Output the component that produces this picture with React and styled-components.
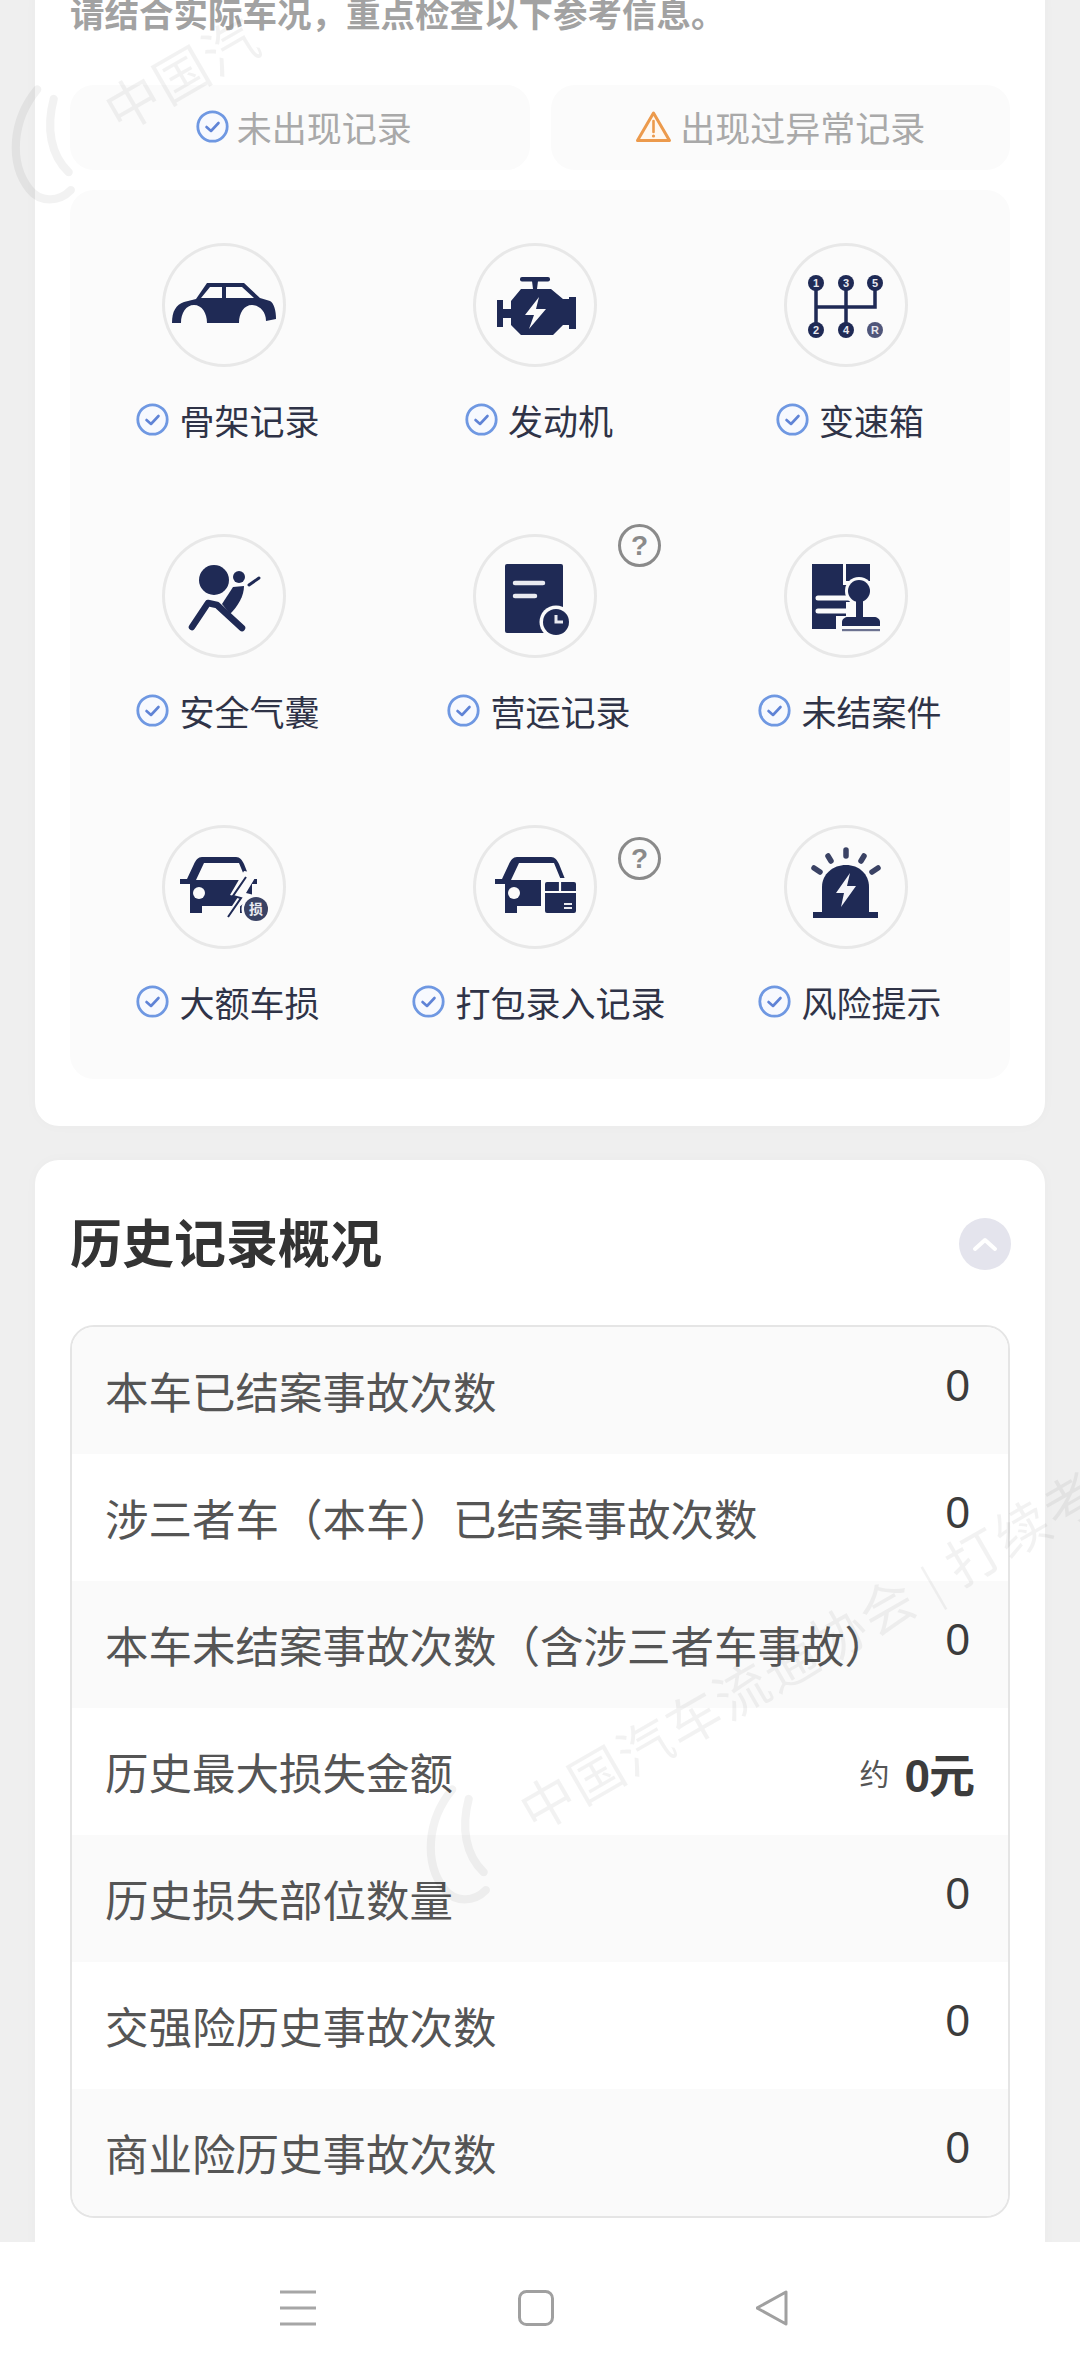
import React from 'react'
import styled, { createGlobalStyle } from 'styled-components'

const NAVY = '#1f2a55'
const BG = '#fbfbfb'

const GlobalStyle = createGlobalStyle`
  html, body {
    margin: 0;
    padding: 0;
    background: #efefef;
  }
  * {
    box-sizing: border-box;
  }
`

const Shell = styled.div`
  position: relative;
  display: flex;
  flex-direction: column;
  width: 1080px;
  height: 2374px;
  overflow: hidden;
  background: #efefef;
  font-family: 'Liberation Sans', 'Noto Sans CJK SC', sans-serif;
`

const Content = styled.main`
  position: relative;
  flex: 1;
  min-height: 0;
  overflow: hidden;
  padding: 0 35px;
`

const Card = styled.section`
  background: #fff;
  border-radius: 24px;
  padding: 0 35px;
  box-shadow: 0 0 14px rgba(0, 0, 0, 0.025);
`

const CheckCard = styled(Card)`
  margin-top: -24px;
  margin-bottom: 34px;
  padding-top: 19px;
  padding-bottom: 47px;
`

const HistoryCard = styled(Card)`
  padding-top: 56px;
  padding-bottom: 100px;
`

const Hint = styled.p`
  margin: 0;
  font-size: 34.5px;
  line-height: 40px;
  font-weight: 700;
  color: #a2a2a2;
`

const Tabs = styled.div`
  display: grid;
  grid-template-columns: 1fr 1fr;
  gap: 21px;
  margin-top: 50px;
`

const Tab = styled.div`
  display: flex;
  align-items: center;
  justify-content: center;
  gap: 8px;
  height: 85px;
  padding-bottom: 2px;
  padding-left: ${p => p.$inset || 0}px;
  border-radius: 24px;
  background: ${BG};
  font-size: 35px;
  color: #a9a9a9;
`

const Panel = styled.div`
  display: grid;
  grid-template-columns: repeat(3, 311px);
  row-gap: 90px;
  margin-top: 20px;
  padding: 53px 0;
  border-radius: 24px;
  background: ${BG};
`

const Item = styled.div`
  position: relative;
  display: flex;
  flex-direction: column;
  align-items: center;
  gap: 27px;
  margin-left: -3px;
`

const Disc = styled.div`
  width: 124px;
  height: 124px;
  border-radius: 50%;
  box-shadow: inset 0 0 0 3px #e8e8e8;

  svg {
    display: block;
  }
`

const ItemLabel = styled.div`
  display: flex;
  align-items: center;
  gap: 10px;
  height: 50px;
  padding-left: 8px;
  font-size: 35px;
  color: #2f3347;
  white-space: nowrap;
`

const Help = styled.span`
  position: absolute;
  left: 50%;
  top: ${p => p.$top}px;
  margin-left: 83px;
  display: flex;
  align-items: center;
  justify-content: center;
  width: 43px;
  height: 43px;
  border: 3px solid #8a8a8a;
  border-radius: 50%;
  font-size: 28px;
  font-weight: 700;
  color: #8a8a8a;
`

const Header = styled.header`
  display: flex;
  align-items: center;
  justify-content: space-between;
  height: 52px;
`

const Title = styled.h2`
  margin: 0;
  padding-bottom: 4px;
  font-size: 52px;
  font-weight: 700;
  color: #333;
`

const Toggle = styled.span`
  display: flex;
  align-items: center;
  justify-content: center;
  width: 52px;
  height: 52px;
  margin: 3px -1px 0 0;
  border-radius: 50%;
  background: #e4e4ed;
`

const Table = styled.div`
  margin-top: 57px;
  border: 2px solid #e5e5e5;
  border-radius: 24px;
  overflow: hidden;
`

const Row = styled.div`
  display: flex;
  align-items: center;
  justify-content: space-between;
  height: 127px;
  padding: 0 38px 0 33px;
  background: ${p => (p.$striped ? '#fafafa' : '#fff')};
  font-size: 43.5px;
  color: #555;
  white-space: nowrap;
`

const Count = styled.span`
  padding-bottom: 9px;
  font-size: 44px;
  color: #3c3c3c;
`

const Amount = styled.span`
  display: flex;
  align-items: center;
  gap: 15px;
  margin-right: -4px;
  font-size: 30px;
  color: #555;

  b {
    font-size: 46px;
    letter-spacing: -1px;
    color: #3c3c3c;
  }
`

const Watermark = styled.div`
  position: absolute;
  left: ${p => p.$left}px;
  top: ${p => p.$top}px;
  display: flex;
  align-items: center;
  gap: 14px;
  transform: rotate(-30deg);
  transform-origin: left center;
  font-family: 'Liberation Serif', 'Noto Sans CJK SC', serif;
  font-size: 54px;
  letter-spacing: 2px;
  color: rgba(0, 0, 0, 0.05);
  white-space: nowrap;
  pointer-events: none;
`

const NavBar = styled.nav`
  position: relative;
  flex: none;
  display: flex;
  align-items: center;
  justify-content: center;
  gap: 202px;
  height: 132px;
  padding-right: 8px;
  background: #fff;
`

const CheckMark = ({ size = 33 }) => (
  <svg width={size} height={size} viewBox="0 0 33 33">
    <circle cx="16.5" cy="16.5" r="14.7" fill="#f7f9fe" stroke="#6f98e2" strokeWidth="2.8" />
    <path d="M10.5 17 L15 21 L22.5 13" fill="none" stroke="#5f83d6" strokeWidth="2.6" strokeLinecap="round" strokeLinejoin="round" />
  </svg>
)

const WarnMark = () => (
  <svg width="37" height="34" viewBox="0 0 37 34">
    <path d="M18.5 3 L34.5 30.5 H2.5 Z" fill="#fff8f0" stroke="#ec9a4c" strokeWidth="3" strokeLinejoin="round" />
    <path d="M18.5 11 V22" stroke="#ec9a4c" strokeWidth="2.6" strokeLinecap="round" />
    <circle cx="18.5" cy="26" r="1.6" fill="#ec9a4c" />
  </svg>
)

const Swirl = () => (
  <svg width="110" height="130" viewBox="0 0 90 110" fill="none" stroke="rgba(0,0,0,0.05)" strokeWidth="7" strokeLinecap="round">
    <path d="M62 8 C30 20 10 50 14 78 C16 92 30 100 44 96" />
    <path d="M70 22 C52 40 44 62 50 82" />
  </svg>
)

const Glyph = ({ children }) => (
  <svg width="124" height="124" viewBox="0 0 124 124">
    {children}
  </svg>
)

const FrameIcon = () => (
  <Glyph>
    <path
      fill={NAVY}
      fillRule="evenodd"
      d="M10 80 C10 68 14 62 22 59 L34 56 L45 40 H82 L98 55 L108 58 C112 60 114 68 114 76 L104 78 C104 68 97 62 90 62 C82 62 77 70 77 80 H45 C45 70 40 62 32 62 C24 62 19 70 19 80 Z M48 44 L39 55 H60 V44 Z M64 44 V55 H92 L80 44 Z"
    />
  </Glyph>
)

const EngineIcon = () => (
  <Glyph>
    <g fill={NAVY}>
      <rect x="47" y="34" width="30" height="4.5" rx="2" />
      <path d="M59 38 H65 L64 46 H60 Z" />
      <rect x="24" y="57" width="6" height="27" />
      <rect x="30" y="66" width="9" height="9" />
      <path d="M48 46 H78 L90 56 H96 V54 H103 V86 H96 V82 H90 L80 92 H48 L38 82 V58 Z" />
    </g>
    <path d="M66 54 L52 72 H61 L56 86 L73 66 H63 Z" fill={BG} />
  </Glyph>
)

const GearIcon = () => {
  const dots = [
    [32, 40, '1'],
    [62, 40, '3'],
    [91, 40, '5'],
    [32, 87, '2'],
    [62, 87, '4'],
    [91, 87, 'R'],
  ]
  return (
    <Glyph>
      <path d="M32 40 V87 M62 40 V87 M32 64 H91 V40" fill="none" stroke={NAVY} strokeWidth="3.5" />
      {dots.map(([x, y, n]) => (
        <g key={n}>
          <circle cx={x} cy={y} r="8" fill={n === 'R' ? '#50567a' : NAVY} />
          <text x={x} y={y + 3.8} textAnchor="middle" fontSize="11" fontWeight="700" fontFamily="Liberation Sans" fill="#e8e9f0">
            {n}
          </text>
        </g>
      ))}
    </Glyph>
  )
}

const AirbagIcon = () => (
  <Glyph>
    <circle cx="52" cy="46" r="15" fill={NAVY} />
    <circle cx="77" cy="43" r="6" fill={NAVY} />
    <path d="M87 51 L97 44" stroke={NAVY} strokeWidth="3" strokeLinecap="round" />
    <path d="M71 53 L82 52 C82 62 76 72 68 80 L60 70 Z" fill={NAVY} />
    <path d="M30 93 L46 69 L55 71 L80 94" fill="none" stroke={NAVY} strokeWidth="6.5" strokeLinecap="round" strokeLinejoin="round" />
  </Glyph>
)

const LedgerIcon = () => (
  <Glyph>
    <rect x="32" y="30" width="58" height="69" rx="2" fill={NAVY} />
    <path d="M42 49 H70 M42 62 H62" stroke="#e9eaf1" strokeWidth="4.5" strokeLinecap="round" />
    <circle cx="83" cy="88" r="16.5" fill={BG} />
    <circle cx="83" cy="88" r="13" fill={NAVY} />
    <path d="M83 81 V88 H90" fill="none" stroke="#e9eaf1" strokeWidth="3" />
  </Glyph>
)

const StampIcon = () => (
  <Glyph>
    <path fill={NAVY} d="M28 30 H59 V51 H66 V82 H52 V95 H28 Z" />
    <path fill={NAVY} d="M62 30 H86 V47 H62 Z" />
    <path d="M34 64 H68 M34 77 H68" stroke={BG} strokeWidth="5" strokeLinecap="round" />
    <circle cx="75" cy="57" r="14" fill={BG} />
    <rect x="62" y="68" width="12" height="16" fill={BG} />
    <circle cx="75" cy="57" r="11" fill={NAVY} />
    <path d="M72 62 H79 V84 H72 Z" fill={NAVY} />
    <path d="M58 92 V88 C58 85 61 83 64 83 H90 C93 83 96 85 96 88 V92 Z" fill={NAVY} />
    <rect x="58" y="95" width="38" height="2.2" fill="#6c7290" />
  </Glyph>
)

// front view of a car shared by the damage and package badges
const CarFront = ({ dx = 0 }) => (
  <g transform={`translate(${dx} 0)`}>
    <path
      fill={NAVY}
      fillRule="evenodd"
      d="M44 32 H78 C82 32 84 35 86 39 L92 54 H99 V59 H94 L94 88 H82 V81 H44 V88 H32 V59 H22 V54 H29 L36 39 C38 35 40 32 44 32 Z M46 38 L38 55 H88 L81 38 Z"
    />
    <circle cx="41" cy="68" r="6" fill={BG} />
  </g>
)

const DamageIcon = () => (
  <Glyph>
    <CarFront dx={-4} />
    <path d="M82 46 L68 70 L76 72 L60 96 L92 70 L84 68 L96 48 Z" fill={BG} />
    <path d="M84 52 L71 71 L79 73 L66 92" fill="none" stroke={NAVY} strokeWidth="2" />
    <circle cx="94" cy="84" r="14.5" fill={BG} />
    <circle cx="94" cy="84" r="12" fill="#3a4264" />
    <text x="94" y="89" textAnchor="middle" fontSize="14" fontWeight="700" fontFamily="Noto Sans CJK SC" fill="#e8e9f0">
      损
    </text>
  </Glyph>
)

const PackageIcon = () => (
  <Glyph>
    <CarFront />
    <rect x="68" y="53" width="39" height="39" fill={BG} />
    <rect x="72" y="57" width="31" height="31" rx="2" fill={NAVY} />
    <path d="M72 67 H103 M87 57 V67" stroke={BG} strokeWidth="2.2" />
    <path d="M91 79 H99 M91 83 H99" stroke="#e9eaf1" strokeWidth="2" />
  </Glyph>
)

const BeaconIcon = () => (
  <Glyph>
    <path d="M62 25 V31 M44 31 L47 36 M80 31 L77 36 M30 43 L36 47 M94 43 L88 47" stroke="#3a4264" strokeWidth="5.5" strokeLinecap="round" />
    <path d="M38 88 V62 C38 49 49 40 62 40 C75 40 85 49 85 62 V88 Z" fill={NAVY} />
    <rect x="29" y="87" width="65" height="6" fill={NAVY} />
    <path d="M66 48 L52 68 H60 L57 82 L72 61 H63 Z" fill="#f4f5fa" />
  </Glyph>
)

const ITEMS = [
  { label: '骨架记录', Icon: FrameIcon },
  { label: '发动机', Icon: EngineIcon },
  { label: '变速箱', Icon: GearIcon },
  { label: '安全气囊', Icon: AirbagIcon },
  { label: '营运记录', Icon: LedgerIcon, help: -10 },
  { label: '未结案件', Icon: StampIcon },
  { label: '大额车损', Icon: DamageIcon },
  { label: '打包录入记录', Icon: PackageIcon, help: 12 },
  { label: '风险提示', Icon: BeaconIcon },
]

const ROWS = [
  '本车已结案事故次数',
  '涉三者车（本车）已结案事故次数',
  '本车未结案事故次数（含涉三者车事故）',
  '历史最大损失金额',
  '历史损失部位数量',
  '交强险历史事故次数',
  '商业险历史事故次数',
]

export default function App() {
  return (
    <Shell>
      <GlobalStyle />
      <Content>
        <CheckCard>
          <Hint>请结合实际车况，重点检查以下参考信息。</Hint>
          <Tabs>
            <Tab $inset={8}>
              <CheckMark />
              未出现记录
            </Tab>
            <Tab>
              <WarnMark />
              出现过异常记录
            </Tab>
          </Tabs>
          <Panel>
            {ITEMS.map(({ label, Icon, help }) => (
              <Item key={label}>
                <Disc>
                  <Icon />
                </Disc>
                <ItemLabel>
                  <CheckMark />
                  {label}
                </ItemLabel>
                {help !== undefined && <Help $top={help}>?</Help>}
              </Item>
            ))}
          </Panel>
        </CheckCard>
        <HistoryCard>
          <Header>
            <Title>历史记录概况</Title>
            <Toggle>
              <svg width="26" height="16" viewBox="0 0 26 16" fill="none" stroke="#fff" strokeWidth="4" strokeLinecap="round" strokeLinejoin="round">
                <path d="M3 13 L13 4 L23 13" />
              </svg>
            </Toggle>
          </Header>
          <Table>
            {ROWS.map((label, i) => (
              <Row key={label} $striped={i % 2 === 0}>
                {label}
                {i === 3 ? (
                  <Amount>
                    约 <b>0元</b>
                  </Amount>
                ) : (
                  <Count>0</Count>
                )}
              </Row>
            ))}
          </Table>
        </HistoryCard>
        <Watermark $left={0} $top={110}>
          <Swirl />
          中国汽
        </Watermark>
        <Watermark $left={415} $top={1810}>
          <Swirl />
          中国汽车流通协会 | 打续考
        </Watermark>
      </Content>
      <NavBar>
        <svg width="36" height="36" viewBox="0 0 36 36" fill="none" stroke="#a6a6a6" strokeWidth="3">
          <path d="M0 2 H36 M0 18 H36 M0 34 H36" />
        </svg>
        <svg width="36" height="36" viewBox="0 0 36 36" fill="none" stroke="#a0a0a0" strokeWidth="3">
          <rect x="1.5" y="1.5" width="33" height="33" rx="7" />
        </svg>
        <svg width="36" height="36" viewBox="0 0 36 36" fill="none" stroke="#a0a0a0" strokeWidth="3" strokeLinejoin="round">
          <path d="M30 2 V34 L1 18 Z" />
        </svg>
      </NavBar>
    </Shell>
  )
}
